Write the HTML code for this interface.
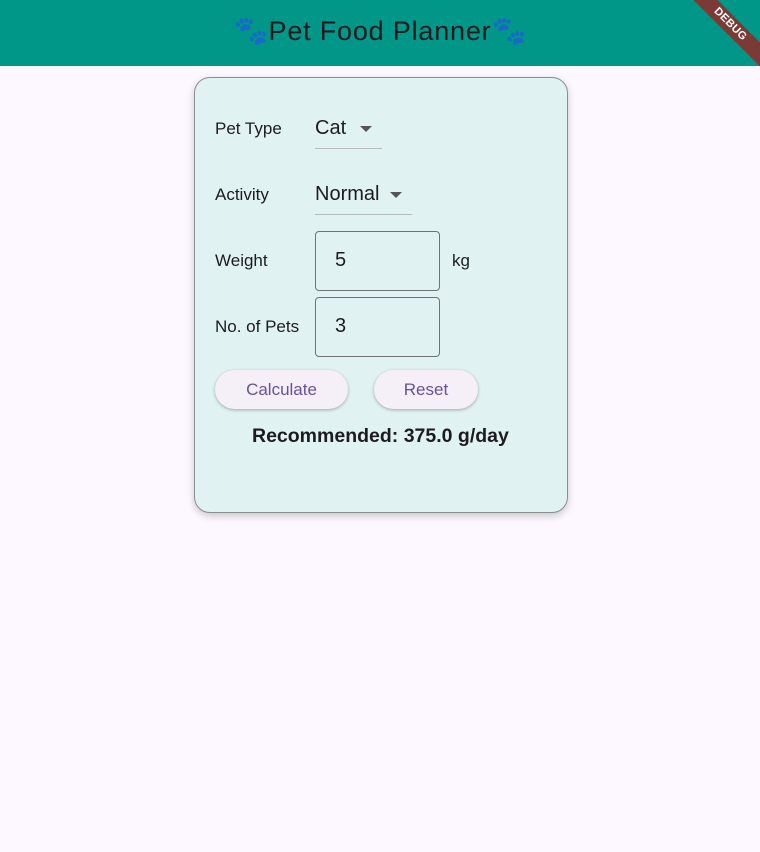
<!DOCTYPE html>
<html><head><meta charset="utf-8"><style>
body{margin:0;width:760px;height:852px;background:#fdf7ff;font-family:"Liberation Sans",sans-serif;position:relative;overflow:hidden;color:#1d1b20}
.bar{position:absolute;left:0;top:0;width:760px;height:66px;background:#009688}
.title{position:absolute;left:0;width:760px;top:14px;text-align:center;font-size:27px;letter-spacing:0.8px;color:#1d1b20}
.paw{color:#1e63c8;font-size:28px;font-family:"DejaVu Sans",sans-serif;letter-spacing:0}
.ribbon{position:absolute;right:-30px;top:16px;width:120px;height:17px;background:#7b3a36;color:#fff;font-size:11px;font-weight:bold;text-align:center;line-height:17px;transform:rotate(45deg);letter-spacing:0.3px}
.card{position:absolute;left:194px;top:77px;width:374px;height:436px;background:#e0f2f1;border:1px solid #8a8f8e;border-radius:16px;box-shadow:0 3px 8px rgba(0,0,0,0.2);box-sizing:border-box}
.a{position:absolute;white-space:nowrap}
.lbl{font-size:17px;color:#1d1b20}
.val{font-size:20px}
.ul{position:absolute;height:1px;background:#b7bcbb}
.tri{position:absolute;width:0;height:0;border-left:6px solid transparent;border-right:6px solid transparent;border-top:6px solid #555}
.box{position:absolute;border:1px solid #6f7473;border-radius:4px;width:125px;height:60px;box-sizing:border-box}
.btn{position:absolute;height:39px;background:#f5eff7;border-radius:20px;box-shadow:0 1px 3px rgba(0,0,0,0.3);color:#6750a4;font-size:17px;text-align:center;line-height:39px}
</style></head><body>
<div class="bar"></div>
<div class="title"><span class="paw">🐾</span>Pet Food Planner<span class="paw">🐾</span></div>
<div class="ribbon">DEBUG</div>
<div class="card">
<div class="a lbl" style="left:20px;top:41px">Pet Type</div>
<div class="a val" style="left:120px;top:39px">Cat</div>
<div class="tri" style="left:165px;top:48px"></div>
<div class="ul" style="left:120px;top:70px;width:67px"></div>
<div class="a lbl" style="left:20px;top:107px">Activity</div>
<div class="a val" style="left:120px;top:105px">Normal</div>
<div class="tri" style="left:195px;top:114px"></div>
<div class="ul" style="left:120px;top:136px;width:97px"></div>
<div class="a lbl" style="left:20px;top:173px">Weight</div>
<div class="box" style="left:120px;top:153px"></div>
<div class="a val" style="left:140px;top:171px">5</div>
<div class="a lbl" style="left:257px;top:173px">kg</div>
<div class="a lbl" style="left:20px;top:239px">No. of Pets</div>
<div class="box" style="left:120px;top:219px"></div>
<div class="a val" style="left:140px;top:237px">3</div>
<div class="btn" style="left:20px;top:292px;width:133px">Calculate</div>
<div class="btn" style="left:179px;top:292px;width:104px">Reset</div>
<div class="a" style="left:57px;top:347px;font-size:19.5px;font-weight:bold;color:#1d1b20">Recommended: 375.0 g/day</div>
</div>
</body></html>
